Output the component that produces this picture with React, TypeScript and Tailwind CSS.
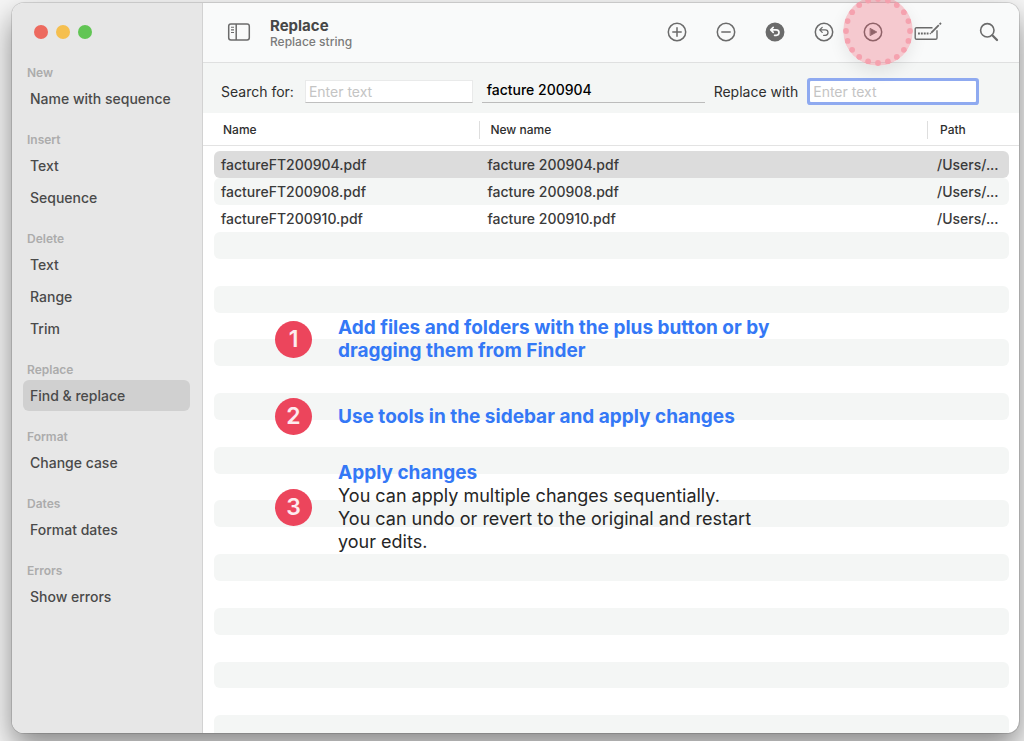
import React from 'react';

const sections = [
  { title: 'New', items: ['Name with sequence'] },
  { title: 'Insert', items: ['Text', 'Sequence'] },
  { title: 'Delete', items: ['Text', 'Range', 'Trim'] },
  { title: 'Replace', items: ['Find & replace'] },
  { title: 'Format', items: ['Change case'] },
  { title: 'Dates', items: ['Format dates'] },
  { title: 'Errors', items: ['Show errors'] },
];

const files = [
  { name: 'factureFT200904.pdf', newName: 'facture 200904.pdf', path: '/Users/...' },
  { name: 'factureFT200908.pdf', newName: 'facture 200908.pdf', path: '/Users/...' },
  { name: 'factureFT200910.pdf', newName: 'facture 200910.pdf', path: '/Users/...' },
];

const rowColors = ['bg-[#dcdcdc]', 'bg-[#f4f6f5]', 'bg-white'];

const CircleIcon: React.FC<{ filled?: boolean; children: React.ReactNode }> = ({ filled, children }) => (
  <svg
    className="w-5 h-5"
    viewBox="0 0 20 20"
    fill="none"
    stroke="currentColor"
    strokeWidth="1.5"
    strokeLinecap="round"
    strokeLinejoin="round"
  >
    <circle cx="10" cy="10" r="8.7" fill={filled ? 'currentColor' : 'none'} />
    {children}
  </svg>
);

const undoPath = 'M8.2 5.4 L5.7 7.9 L8.2 10.4 M6 7.9 H11.3 A2.7 2.7 0 0 1 11.3 13.3 H9.6';

const SidebarIcon = () => (
  <svg className="w-6 h-5" viewBox="0 0 24 20" fill="none" stroke="currentColor" strokeWidth="1.5">
    <rect x="1.7" y="2" width="20.6" height="16" rx="2.2" />
    <path d="M9.2 2 V18" />
    <path d="M4 5.3 H7 M4 7.9 H7 M4 10.5 H7" strokeWidth="1.1" />
  </svg>
);

const RenameIcon = () => (
  <svg className="w-7 h-5" viewBox="0 0 28 20" fill="none" stroke="currentColor" strokeWidth="1.4">
    <path d="M18.5 5.7 H2.6 A1.4 1.4 0 0 0 1.2 7.1 V15.9 A1.4 1.4 0 0 0 2.6 17.3 H21.6 A1.4 1.4 0 0 0 23 15.9 V8.3" />
    <path d="M17.2 10.8 L24.8 3.2" strokeWidth="1.8" />
    <path d="M25.6 2.4 L27 1" strokeWidth="1.8" />
    <path d="M15.8 12.1 L16.9 11.1" strokeWidth="1.2" />
    <path d="M4 11.5 H14.5" strokeWidth="1.9" strokeDasharray="1.9 1" />
  </svg>
);

const SearchIcon = () => (
  <svg className="w-5 h-5" viewBox="0 0 20 20" fill="none" stroke="currentColor" strokeLinecap="round">
    <circle cx="8.3" cy="8.3" r="6.7" strokeWidth="1.6" />
    <path d="M13.3 13.3 L18 18" strokeWidth="2.3" />
  </svg>
);

// Ring of dots drawn over the run button
const Highlight = () => (
  <svg
    className="absolute left-1/2 top-1/2 -translate-x-[30px] -translate-y-9 w-[70px] h-[70px] rounded-full shadow-[0_6px_16px_rgba(0,0,0,0.08)] pointer-events-none"
    viewBox="0 0 70 70"
  >
    <circle cx="35" cy="35" r="35" fill="#ec4a62" fillOpacity="0.28" />
    {Array.from({ length: 20 }, (_, i) => {
      const a = (i * Math.PI) / 10;
      return (
        <circle key={i} cx={35 + 32 * Math.cos(a)} cy={35 + 32 * Math.sin(a)} r="2.9" fill="#f59dab" fillOpacity="0.9" />
      );
    })}
  </svg>
);

const ToolButton: React.FC<{ label: string; wide?: boolean; children: React.ReactNode }> = ({ label, wide, children }) => (
  <button
    type="button"
    aria-label={label}
    className={`relative h-10 flex items-center justify-center ${wide ? 'w-[61px]' : 'w-[49px]'}`}
  >
    {children}
  </button>
);

const Sidebar = () => (
  <nav className="w-[191px] shrink-0 bg-[#e7e7e7] border-r border-[#d2d2d2] pl-[11px] pr-3">
    <div className="flex gap-2 pt-[22px] pl-[11px]">
      <button type="button" aria-label="Close" className="w-3.5 h-3.5 rounded-full bg-[#ed6a5f]" />
      <button type="button" aria-label="Minimize" className="w-3.5 h-3.5 rounded-full bg-[#f5bf4f]" />
      <button type="button" aria-label="Zoom" className="w-3.5 h-3.5 rounded-full bg-[#61c554]" />
    </div>
    <div className="flex flex-col gap-4 pt-6">
      {sections.map((section) => (
        <section key={section.title}>
          <h2 className="h-5 leading-5 pl-1 text-[12px] font-semibold text-[#acacac]">{section.title}</h2>
          <div className="flex flex-col gap-px">
            {section.items.map((item) => (
              <button
                key={item}
                type="button"
                className={`h-[31px] rounded-md pl-[7px] text-left text-[14px] font-medium text-[#4a4a4a] ${
                  item === 'Find & replace' ? 'bg-[#d0d0d0]' : ''
                }`}
              >
                {item}
              </button>
            ))}
          </div>
        </section>
      ))}
    </div>
  </nav>
);

const Toolbar = () => (
  <header className="h-[60px] shrink-0 flex items-center pb-px rounded-tr-[12px] bg-[#f9fafa] border-b border-[#dfe0e0] text-[#6b6b6b]">
    <button type="button" aria-label="Toggle sidebar" className="ml-6">
      <SidebarIcon />
    </button>
    <div className="ml-[19px] flex-1 pt-1">
      <h1 className="text-[15px] leading-4 font-bold text-[#474747]">Replace</h1>
      <p className="text-[12px] leading-4 font-medium text-[#7b7b7b]">Replace string</p>
    </div>
    <ToolButton label="Add files">
      <CircleIcon>
        <path d="M10 5.8 V14.2 M5.8 10 H14.2" />
      </CircleIcon>
    </ToolButton>
    <ToolButton label="Remove files">
      <CircleIcon>
        <path d="M5.8 10 H14.2" />
      </CircleIcon>
    </ToolButton>
    <ToolButton label="Revert to original">
      <CircleIcon filled>
        <path d={undoPath} stroke="#f9fafa" strokeWidth="1.7" />
      </CircleIcon>
    </ToolButton>
    <ToolButton label="Undo">
      <CircleIcon>
        <path d={undoPath} strokeWidth="1.3" />
      </CircleIcon>
    </ToolButton>
    <ToolButton label="Apply changes">
      <CircleIcon>
        <path d="M7.4 6.5 L13.8 10 L7.4 13.5 Z" fill="currentColor" strokeWidth="0.8" />
      </CircleIcon>
      <Highlight />
    </ToolButton>
    <ToolButton label="Rename" wide>
      <RenameIcon />
    </ToolButton>
    <ToolButton label="Search" wide>
      <SearchIcon />
    </ToolButton>
  </header>
);

const ReplaceForm = () => (
  <form className="h-[50px] shrink-0 flex items-center bg-[#f4f6f5] pl-[18px] pr-[43px] pt-1.5 text-[14px] text-[#2e2e2e]">
    <label htmlFor="search">Search for:</label>
    <input
      id="search"
      type="text"
      placeholder="Enter text"
      className="ml-[11px] flex-3 min-w-0 h-[23px] px-[3px] bg-white border border-[#e9eaea] border-b-[#bfbfbf] placeholder:text-[#c4c4c4]"
    />
    <output htmlFor="search replace" className="ml-[9px] flex-4 min-w-0 h-[23px] px-[5px] leading-5 border-b border-[#bcbcbc] font-medium text-black">
      facture 200904
    </output>
    <label htmlFor="replace" className="ml-[9px]">Replace with</label>
    <input
      id="replace"
      type="text"
      placeholder="Enter text"
      className="ml-3 flex-3 min-w-0 h-[21px] px-[3px] bg-white ring-3 ring-[#8faaf0] rounded-[1px] outline-none placeholder:text-[#c4c4c4]"
    />
  </form>
);

const FileTable = () => (
  <table className="w-full table-fixed border-separate border-spacing-0 text-left">
    <thead>
      <tr className="text-[12px] leading-[18px] text-[#2e2e2e]">
        <th className="h-[33px] w-[34%] p-0 pt-0.5 font-medium border-b border-[#e3e3e3]">
          <div className="h-[18px] pl-5 border-r border-[#dedede]">Name</div>
        </th>
        <th className="p-0 pt-0.5 font-medium border-b border-[#e3e3e3]">
          <div className="h-[18px] pl-2.5 border-r border-[#dedede]">New name</div>
        </th>
        <th className="w-[91px] p-0 pt-0.5 pl-3 font-medium border-b border-[#e3e3e3]">Path</th>
      </tr>
    </thead>
    <tbody className="text-[14px] font-medium text-[#3a3a3a] before:block before:h-[5px]">
      {files.map((file, i) => (
        <tr key={file.name}>
          <td className="p-0 pl-[11px]">
            <div className={`h-[27px] leading-7 pl-[7px] rounded-l-md ${rowColors[i]}`}>{file.name}</div>
          </td>
          <td className="p-0">
            <div className={`h-[27px] leading-7 pl-[7px] ${rowColors[i]}`}>{file.newName}</div>
          </td>
          <td className="p-0 pr-2.5">
            <div className={`h-[27px] leading-7 pl-[9px] rounded-r-md ${rowColors[i]}`}>{file.path}</div>
          </td>
        </tr>
      ))}
    </tbody>
  </table>
);

// Empty rows share the rest of the window, the last one is cut off by its edge
const EmptyRows = () => (
  <div className="flex-1 flex flex-col pl-[11px] pr-2.5">
    {Array.from({ length: 18 }, (_, i) => (
      <div key={i} className={`flex-3 rounded-md ${i % 2 === 0 ? 'bg-[#f4f6f5]' : ''}`} />
    ))}
    <div className="flex-2 rounded-t-md bg-[#f4f6f5]" />
  </div>
);

const Badge: React.FC<{ n: number }> = ({ n }) => (
  <span className="w-[37px] h-[37px] shrink-0 rounded-full bg-[#ec455c] flex items-center justify-center text-[23px] font-semibold text-white/90">
    {n}
  </span>
);

const stepTitle = 'text-[19px] leading-[23px] font-bold text-[#3478f6]';

const Steps = () => (
  <ol className="absolute left-[72px] top-[203px] text-[18px] leading-[23px] text-[#262626]">
    <li className="flex items-center gap-[26px]">
      <Badge n={1} />
      <p className={stepTitle}>
        Add files and folders with the plus button or by
        <br />
        dragging them from Finder
      </p>
    </li>
    <li className="flex items-center gap-[26px] mt-9">
      <Badge n={2} />
      <p className={stepTitle}>Use tools in the sidebar and apply changes</p>
    </li>
    <li className="flex items-center gap-[26px] mt-[26px]">
      <Badge n={3} />
      <div>
        <h3 className={stepTitle}>Apply changes</h3>
        <p>
          You can apply multiple changes sequentially.
          <br />
          You can undo or revert to the original and restart
          <br />
          your edits.
        </p>
      </div>
    </li>
  </ol>
);

export default function App() {
  return (
    <div className="min-h-screen flex overflow-hidden bg-[#f6f6f6] pt-[3px] pr-[5px] pb-2 pl-3 font-['Inter','Liberation_Sans',sans-serif]">
      <div className="flex-1 flex rounded-[12px] bg-white shadow-[0_0_0_1px_rgba(0,0,0,0.12),0_14px_30px_rgba(0,0,0,0.45)]">
        <div className="flex rounded-l-[12px] overflow-hidden">
          <Sidebar />
        </div>
        <main className="flex-1 min-w-0 flex flex-col">
          <Toolbar />
          <ReplaceForm />
          <div className="relative flex-1 flex flex-col">
            <FileTable />
            <EmptyRows />
            <Steps />
          </div>
        </main>
      </div>
    </div>
  );
}
